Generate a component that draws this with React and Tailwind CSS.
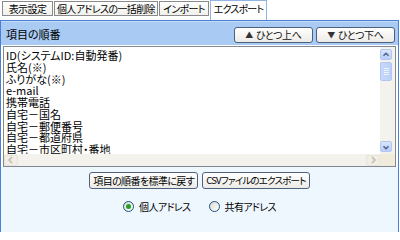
import React from "react";

const items = [
  "ID(システムID:自動発番)",
  "氏名(※)",
  "ふりがな(※)",
  "e-mail",
  "携帯電話",
  "自宅－国名",
  "自宅－郵便番号",
  "自宅－都道府県",
  "自宅－市区町村・番地",
  "自宅－建物名",
  "自宅－電話番号",
];

const tabs = [
  { label: "表示設定", w: "w-[51px]" },
  { label: "個人アドレスの一括削除", w: "w-[104px]" },
  { label: "インポート", w: "w-[50px]" },
];

// XP-style scrollbar arrow button
const ScrollBtn = ({ dir, disabled }) => {
  const paths = {
    up: "M3 7 L6 4 L9 7",
    down: "M3 5 L6 8 L9 5",
    left: "M7 3 L4 6 L7 9",
    right: "M5 3 L8 6 L5 9",
  };
  return (
    <div
      className={`flex items-center justify-center rounded-[2px] border ${
        disabled
          ? "border-[#e8e4da] bg-[#f1eee6] w-[14px] h-[11px]"
          : "border-[#b2c6f2] bg-gradient-to-b from-[#dbe6fd] to-[#b9cdf8] w-[12px] h-[11px]"
      }`}
    >
      <svg width="12" height="12" viewBox="0 0 12 12">
        <path
          d={paths[dir]}
          fill="none"
          stroke={disabled ? "#c9c5bb" : "#4d6185"}
          strokeWidth="1.8"
        />
      </svg>
    </div>
  );
};

const HeadButton = ({ up, children }) => (
  <button className="flex items-center justify-center gap-[3px] w-[79px] h-[16px] rounded-[3px] border border-[#4f5f7e] bg-gradient-to-b from-white to-[#ecebe6] text-[10px] tracking-[-0.3px] text-[#111] leading-none">
    <span className="text-[8px] text-[#333]">{up ? "▲" : "▼"}</span>
    {children}
  </button>
);

const Radio = ({ checked, label }) => (
  <label className="flex items-center gap-[5px]">
    <span className="flex items-center justify-center w-[11px] h-[11px] rounded-full border border-[#1c5180] bg-gradient-to-br from-[#dcdcd5] to-white">
      {checked && <span className="w-[5px] h-[5px] rounded-full bg-[#21a121]" />}
    </span>
    <span>{label}</span>
  </label>
);

export default function App() {
  return (
    <div
      className="w-[400px] h-[232px] overflow-hidden bg-white text-[11px] text-black [font-feature-settings:'palt']"
      style={{ fontFamily: '"Noto Sans CJK JP", "Noto Sans", sans-serif' }}
    >
      {/* Tabs */}
      <div className="flex h-[20px] pl-[2px] gap-[1px]">
        {tabs.map((t) => (
          <div
            key={t.label}
            className={`${t.w} h-[15px] mt-[1px] flex items-center justify-center border border-[#8a8a8a] bg-gradient-to-b from-white to-[#f0f0ec] text-[10px] leading-none tracking-[-0.6px] whitespace-nowrap`}
          >
            {t.label}
          </div>
        ))}
        <div className="w-[57px] h-[20px] flex items-start pt-[3px] justify-center border border-b-0 border-[#91b4e6] bg-white text-[10px] tracking-[-0.8px] leading-none whitespace-nowrap">
          エクスポート
        </div>
      </div>

      {/* Panel */}
      <div className="w-[399px] h-[216px] border border-[#4a7fd6] flex flex-col">
        <div className="h-[24px] bg-[#a8caf3] border-t border-[#c5dcf8] flex items-center justify-between pl-[5px] pr-[3px]">
          <span className="text-[11px] pt-[1px]">項目の順番</span>
          <div className="flex gap-[3px] pt-[2px]">
            <HeadButton up>ひとつ上へ</HeadButton>
            <HeadButton>ひとつ下へ</HeadButton>
          </div>
        </div>

        <div className="bg-white px-[2px] pt-[1px]">
          <div className="h-[121px] border border-[#828790] grid grid-cols-[1fr_15px] grid-rows-[1fr_12px]">
            <div className="overflow-hidden pl-[2px] pt-[3px]">
              {items.map((it) => (
                <div key={it} className="h-[11.75px] leading-[11.75px] whitespace-nowrap">
                  {it}
                </div>
              ))}
            </div>
            <div className="bg-[#f4f2ec] flex flex-col items-start pt-[2px] pb-[2px]">
              <ScrollBtn dir="up" />
              <div className="mt-[2px] w-[12px] h-[19px] rounded-[2px] border border-[#b2c6f2] bg-gradient-to-r from-[#c9d8fc] to-[#bccffa] flex flex-col items-center justify-center gap-[1px]">
                <span className="w-[5px] h-px bg-[#eef3fe]" />
                <span className="w-[5px] h-px bg-[#eef3fe]" />
                <span className="w-[5px] h-px bg-[#eef3fe]" />
                <span className="w-[5px] h-px bg-[#eef3fe]" />
              </div>
              <div className="flex-1" />
              <ScrollBtn dir="down" />
            </div>
            <div className="bg-[#f4f2ec] flex items-center justify-between">
              <ScrollBtn dir="left" disabled />
              <ScrollBtn dir="right" disabled />
            </div>
            <div className="bg-[#f1ebdc]" />
          </div>
        </div>

        <div className="flex-1 bg-[#eef6fe] flex flex-col items-center pt-[5px]">
          <div className="flex gap-[4px]">
            <button className="h-[17px] px-[3px] rounded-[3px] border border-[#4f5f7e] bg-gradient-to-b from-white to-[#ecebe6] text-[10px] tracking-[-0.6px] leading-none whitespace-nowrap">
              項目の順番を標準に戻す
            </button>
            <button className="h-[17px] px-[3px] rounded-[3px] border border-[#4f5f7e] bg-gradient-to-b from-white to-[#ecebe6] text-[9.5px] tracking-[-0.8px] leading-none whitespace-nowrap">
              CSVファイルのエクスポート
            </button>
          </div>
          <div className="flex gap-[18px] mt-[10px] text-[10px] tracking-[-0.6px]">
            <Radio checked label="個人アドレス" />
            <Radio label="共有アドレス" />
          </div>
        </div>
      </div>
    </div>
  );
}
